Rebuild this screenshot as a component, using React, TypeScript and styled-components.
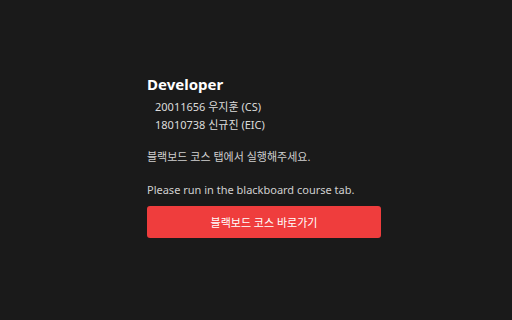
import styled, { createGlobalStyle } from 'styled-components';

const GlobalStyle = createGlobalStyle`
  html, body {
    margin: 0;
    padding: 0;
    background: #1a1a1a;
  }
  body {
    font-family: "Noto Sans", "Noto Sans CJK KR", sans-serif;
  }
`;

const Page = styled.main`
  display: flex;
  justify-content: center;
  align-items: center;
  width: 512px;
  height: 320px;
  background: #1a1a1a;
`;

const Panel = styled.section`
  display: flex;
  flex-direction: column;
  width: 234px;
  margin-left: 16px;
  margin-top: -8px;
`;

const Title = styled.h1`
  margin: 0 0 4px;
  font-size: 15px;
  font-weight: 700;
  line-height: 20px;
  color: #ffffff;
`;

const MemberList = styled.ul`
  list-style: none;
  margin: 0 0 14px;
  padding: 0 0 0 8px;
`;

const Member = styled.li`
  font-size: 11px;
  line-height: 18px;
  color: #dcdcdc;
`;

const Notice = styled.p<{ $gap: number }>`
  margin: 0 0 ${(p) => p.$gap}px;
  font-size: 11px;
  line-height: 18px;
  color: #d0d0d0;
`;

const LinkButton = styled.button`
  height: 32px;
  border: none;
  border-radius: 3px;
  background: #ef3d3d;
  color: #ffffff;
  font-family: inherit;
  font-size: 11px;
  cursor: pointer;
`;

export default function App() {
  return (
    <>
      <GlobalStyle />
      <Page>
        <Panel>
          <Title>Developer</Title>
          <MemberList>
            <Member>20011656 우지훈 (CS)</Member>
            <Member>18010738 신규진 (EIC)</Member>
          </MemberList>
          <Notice $gap={15}>블랙보드 코스 탭에서 실행해주세요.</Notice>
          <Notice $gap={7}>Please run in the blackboard course tab.</Notice>
          <LinkButton>블랙보드 코스 바로가기</LinkButton>
        </Panel>
      </Page>
    </>
  );
}
